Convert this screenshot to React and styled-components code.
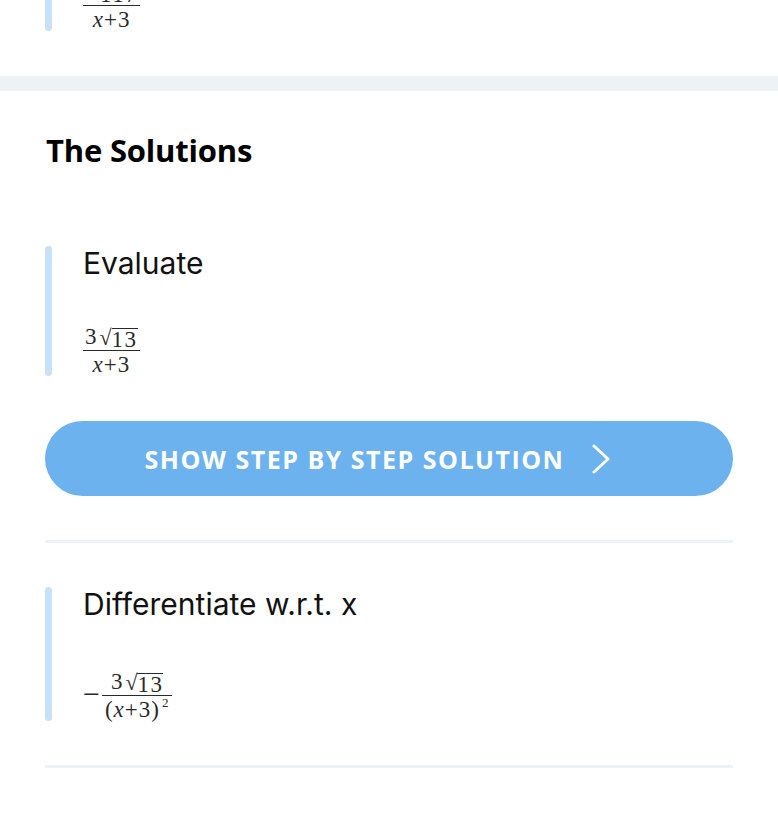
import React from "react";
import styled, { createGlobalStyle } from "styled-components";

const Global = createGlobalStyle`
  html, body { margin: 0; padding: 0; background: #ffffff; }
  body { font-family: Inter, "Noto Sans", sans-serif; color: #000; overflow: hidden; }
`;

const Page = styled.div`
  width: 778px;
  height: 829px;
  overflow: hidden;
  background: #fff;
`;

const Section = styled.section`
  padding: 0 45px;
  display: flex;
  flex-direction: column;
`;

const TopClip = styled(Section)`
  height: 31px;
  overflow: hidden;
  justify-content: flex-end;
  margin-bottom: 45px;
`;

const Band = styled.div`
  height: 15px;
  background: #edf2f7;
`;

const Heading = styled.h2`
  margin: 41px 0 0 1px;
  font-family: "Open Sans", Lato, sans-serif;
  font-weight: 700;
  font-size: 31px;
  line-height: 36px;
  letter-spacing: -0.2px;
  color: #000;
`;

const Card = styled.div`
  display: flex;
  align-items: stretch;
  flex: none;
  margin-top: ${(p) => p.$top || 0}px;
`;

const Bar = styled.div`
  width: 7px;
  flex: none;
  border-radius: 4px;
  background: #c6e1f8;
`;

const Body = styled.div`
  padding-left: 31px;
  display: flex;
  flex-direction: column;
`;

const Title = styled.div`
  font-family: Inter, "Noto Sans", sans-serif;
  font-size: 30px;
  line-height: 36px;
  margin-top: -1px;
  color: #111;
`;

const Math = styled.div`
  margin-top: ${(p) => p.$top || 0}px;
  display: flex;
  align-items: center;
  font-family: "Liberation Serif", "DejaVu Serif", serif;
  font-size: 23px;
  color: #2a2a2a;
  line-height: 1;
`;

const Frac = styled.span`
  display: inline-flex;
  flex-direction: column;
  align-items: center;
`;

const Num = styled.span`
  display: flex;
  align-items: flex-end;
  padding: 0 2px 2px;
`;

const Den = styled.span`
  display: block;
  text-align: center;
  padding: 2px 3px 0;
  border-top: 1.5px solid #2a2a2a;
  align-self: stretch;
  letter-spacing: 1px;
`;

const Sqrt = styled.span`
  display: inline-flex;
  align-items: flex-end;
  margin-left: 3px;
`;

const Radical = styled.span`
  font-size: 22px;
  line-height: 1;
  transform: translateY(1px);
`;

const Radicand = styled.span`
  border-top: 1.3px solid #2a2a2a;
  padding-top: 2px;
  line-height: 17px;
  letter-spacing: 1.5px;
`;

const Var = styled.i`
  font-style: italic;
`;

const Sup = styled.sup`
  font-size: 13px;
  vertical-align: 10px;
  line-height: 0;
  margin-left: 2px;
`;

const Minus = styled.span`
  font-size: 30px;
  margin-right: 2px;
  transform: translateY(-2px);
`;

const Button = styled.button`
  margin-top: 45px;
  height: 75px;
  flex: none;
  border: none;
  border-radius: 38px;
  background: #6cb2ee;
  color: #fff;
  display: flex;
  align-items: center;
  justify-content: center;
  gap: 28px;
  font-family: "Open Sans", Lato, sans-serif;
  font-weight: 700;
  font-size: 25px;
  letter-spacing: 1.5px;
  padding: 0 22px 0 0;
  cursor: pointer;
`;

const Divider = styled.div`
  height: 3px;
  flex: none;
  background: #ebf2f9;
  margin-top: ${(p) => p.$top || 0}px;
`;

const Chevron = () => (
  <svg width="19" height="30" viewBox="0 0 19 30" fill="none">
    <polyline points="2,2 16,15 2,28" stroke="#fff" strokeWidth="3" strokeLinecap="round" strokeLinejoin="round" />
  </svg>
);

const SqrtN = ({ n }) => (
  <Sqrt>
    <Radical>√</Radical>
    <Radicand>{n}</Radicand>
  </Sqrt>
);

const XPlus3 = () => (
  <>
    <Var>x</Var>+3
  </>
);

export default function App() {
  return (
    <Page>
      <Global />
      <TopClip>
        <Card>
          <Bar />
          <Body>
            <Title>Simplify</Title>
            <Math $top={44}>
              <Frac>
                <Num>
                  <SqrtN n="117" />
                </Num>
                <Den>
                  <XPlus3 />
                </Den>
              </Frac>
            </Math>
          </Body>
        </Card>
      </TopClip>
      <Band />
      <Section>
        <Heading>The Solutions</Heading>
        <Card $top={78}>
          <Bar />
          <Body>
            <Title>Evaluate</Title>
            <Math $top={44}>
              <Frac>
                <Num>
                  3<SqrtN n="13" />
                </Num>
                <Den>
                  <XPlus3 />
                </Den>
              </Frac>
            </Math>
          </Body>
        </Card>
        <Button>
          <span>SHOW STEP BY STEP SOLUTION</span>
          <Chevron />
        </Button>
        <Divider $top={44} />
        <Card $top={44}>
          <Bar />
          <Body>
            <Title>Differentiate w.r.t. x</Title>
            <Math $top={48}>
              <Minus>−</Minus>
              <Frac>
                <Num>
                  3<SqrtN n="13" />
                </Num>
                <Den>
                  (<Var>x</Var>+3)<Sup>2</Sup>
                </Den>
              </Frac>
            </Math>
          </Body>
        </Card>
        <Divider $top={44} />
      </Section>
    </Page>
  );
}
